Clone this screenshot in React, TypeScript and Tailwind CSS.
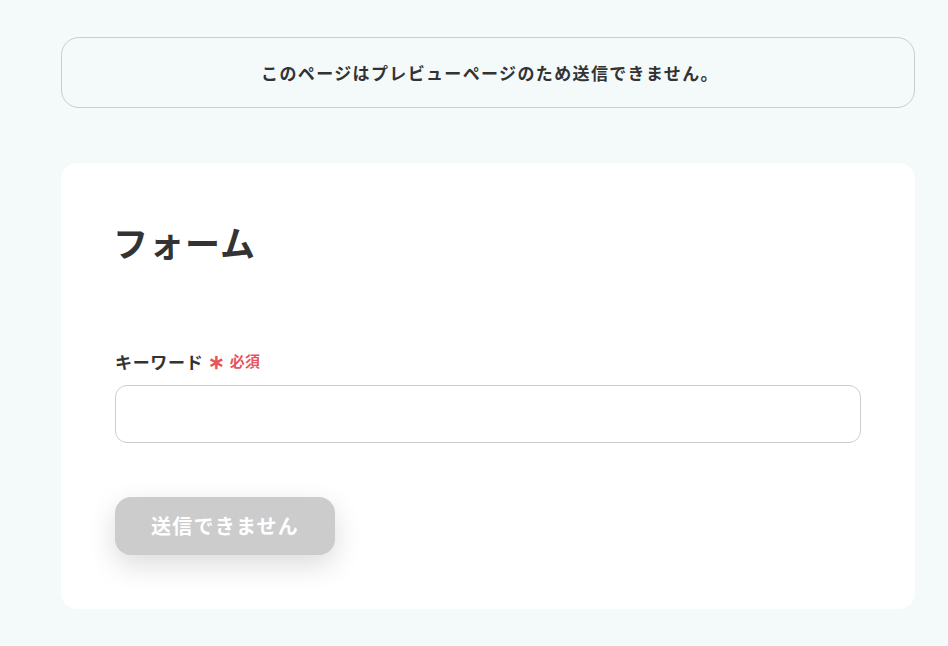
export default function App() {
  return (
    <div
      className="min-h-[646px] bg-[#f4f9f9] pt-[37px] pb-[38px] pl-[61px] text-[#333]"
      style={{ fontFamily: '"Noto Sans CJK JP", "Noto Sans", sans-serif' }}
    >
      <div className="w-[854px]">
        {/* Notice */}
        <div className="flex h-[71px] items-center justify-center rounded-[18px] border border-[#cccccc]">
          <p className="ml-[4px] text-[17px] font-bold tracking-[0.08em]">
            このページはプレビューページのため送信できません。
          </p>
        </div>

        {/* Form card */}
        <div className="mt-[55px] rounded-[16px] bg-white px-[54px] pt-[53px] pb-[54px]">
          <h1 className="-ml-[2px] text-[35px] leading-[1.5] font-bold tracking-[0.03em]">フォーム</h1>

          <div className="mt-[80px]">
            <label className="flex items-center text-[17px] font-bold tracking-[0.04em]">
              キーワード
              <span className="ml-[5px] flex items-center text-[15px] tracking-[0.02em] text-[#e8545a]">
                <span className="mr-[4px] text-[20px] leading-none">∗</span>必須
              </span>
            </label>
            <input
              type="text"
              className="mt-[11px] block h-[58px] w-full rounded-[12px] border border-[#cccccc] px-4 outline-none"
            />
          </div>

          <button
            type="button"
            disabled
            className="mt-[54px] flex h-[58px] w-[220px] items-center justify-center rounded-[16px] bg-[#cccccc] text-[20px] font-bold tracking-[0.06em] text-white shadow-[0_10px_28px_rgba(0,0,0,0.14)]"
          >
            送信できません
          </button>
        </div>
      </div>
    </div>
  );
}
